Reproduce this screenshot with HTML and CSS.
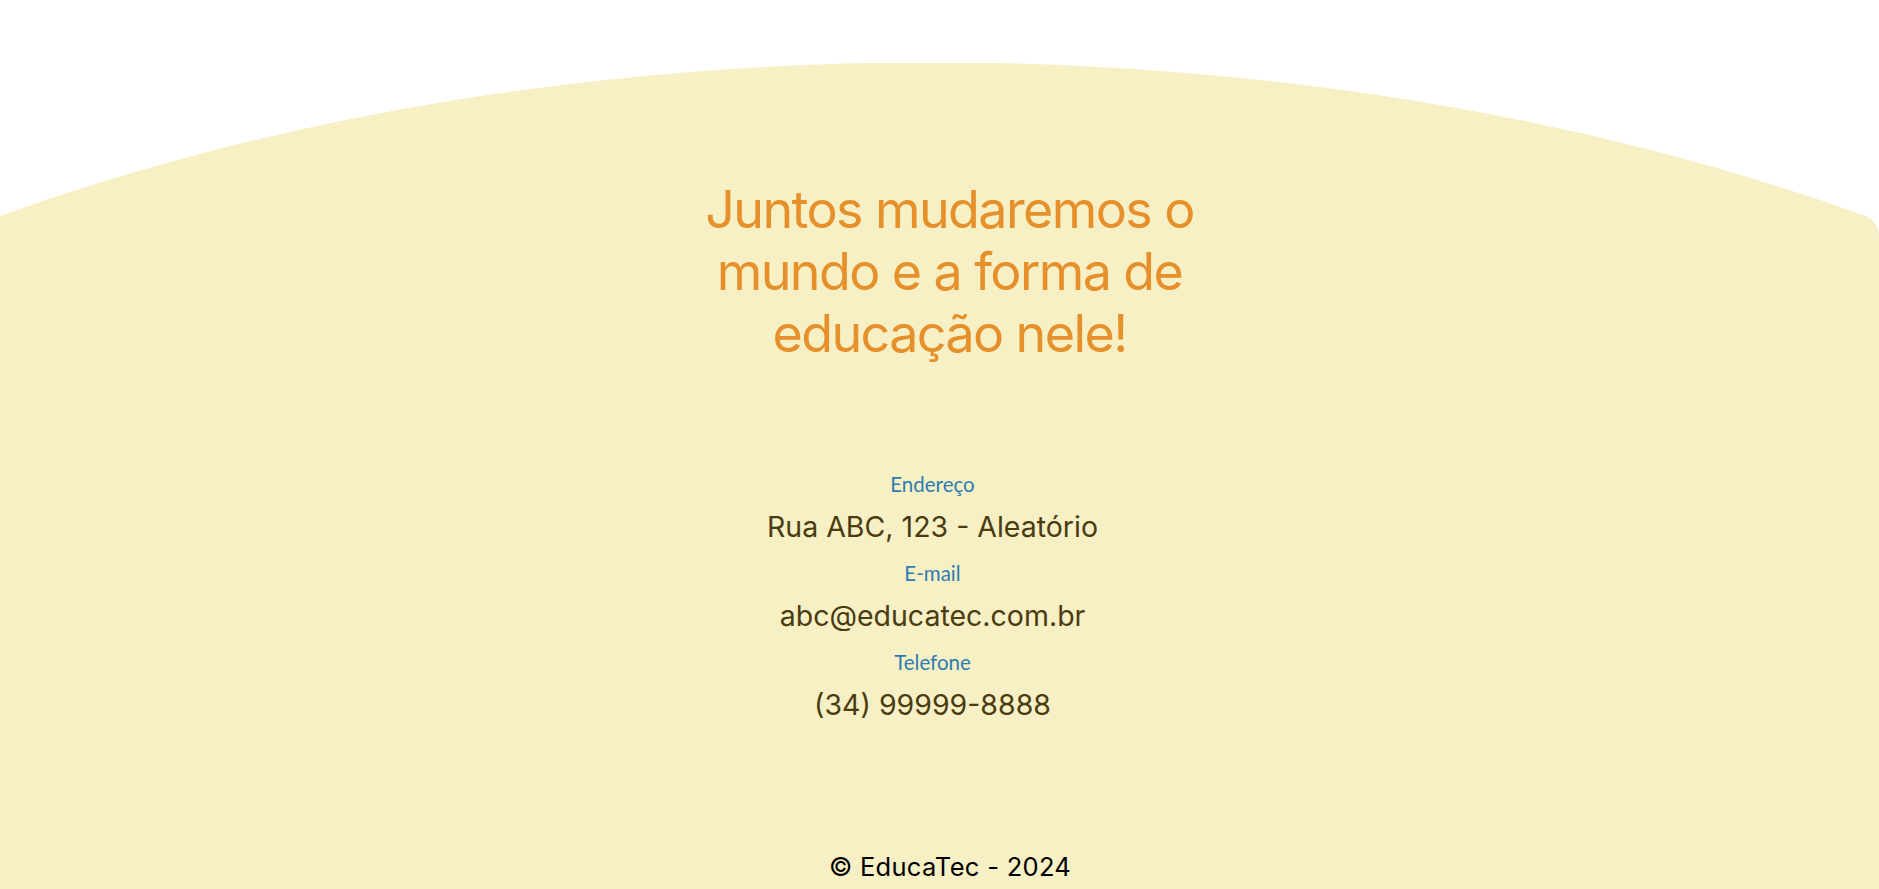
FILE: index.html
```html
<!DOCTYPE html>
<html lang="pt-BR">
<head>
<meta charset="utf-8">
<title>EducaTec</title>
<link rel="stylesheet" href="styles.css">
</head>
<body>
<div class="page">
  <footer class="site-footer">
    <h2 class="slogan">Juntos mudaremos o mundo e a forma de educação nele!</h2>
    <dl class="contact">
      <dt>Endereço</dt>
      <dd>Rua ABC, 123 - Aleatório</dd>
      <dt>E-mail</dt>
      <dd>abc@educatec.com.br</dd>
      <dt>Telefone</dt>
      <dd>(34) 99999-8888</dd>
    </dl>
    <p class="copy">© EducaTec - 2024</p>
  </footer>
</div>
</body>
</html>
```
FILE: styles.css
```css
html, body {
  margin: 0;
  padding: 0;
  background: #ffffff;
}
body {
  font-family: Inter, "Liberation Sans", sans-serif;
  overflow: hidden;
}
.page {
  padding-top: 63px;
}
.site-footer {
  background: #f7f0c5;
  clip-path: path('M0,153 A1700,937 0 0 1 1860,151 Q1877,155 1879,172 L1879,3000 L0,3000 Z');
  padding: 116px 0 40px;
  display: flex;
  flex-direction: column;
  align-items: stretch;
}
.slogan {
  margin: 0 auto;
  padding-left: 20px;
  box-sizing: content-box;
  max-width: 500px;
  font-size: 52px;
  line-height: 62px;
  font-weight: 400;
  letter-spacing: -1.6px;
  color: #e5902b;
  text-align: center;
}
.contact {
  margin: 107px 0 0;
  padding-right: 14px;
  text-align: center;
  display: flex;
  flex-direction: column;
}
.contact dt {
  font-family: Lato, "Open Sans", sans-serif;
  font-size: 20.5px;
  line-height: 24px;
  color: #2f7cb2;
  margin: 0 0 13px;
}
.contact dd {
  margin: 0 0 16px;
  font-size: 28.5px;
  line-height: 36px;
  color: #4a3b10;
}
.copy {
  margin: 113px 0 0;
  padding-left: 21px;
  text-align: center;
  font-size: 25.5px;
  line-height: 30px;
  letter-spacing: 0.3px;
  color: #000000;
}
```
